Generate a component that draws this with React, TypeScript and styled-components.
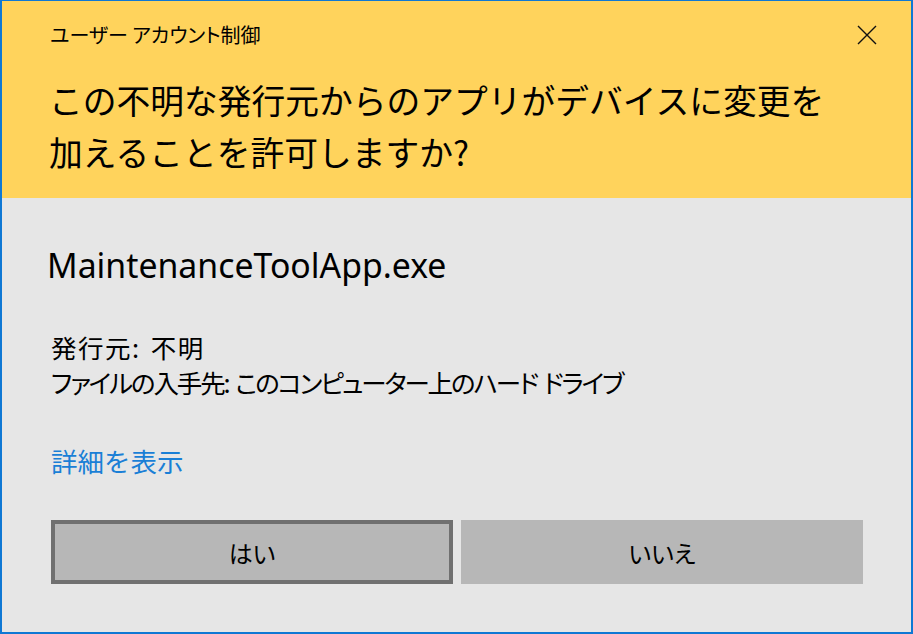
import React from "react";
import styled, { createGlobalStyle } from "styled-components";

const Global = createGlobalStyle`
  html, body { margin: 0; padding: 0; background: #e6e6e6; }
  * { box-sizing: border-box; }
  body { font-family: "Noto Sans CJK JP", "Noto Sans", sans-serif; color: #000; }
`;

const Window = styled.div`
  width: 913px;
  height: 634px;
  border: 2px solid #0f78d4;
  border-top-width: 1px;
  display: flex;
  flex-direction: column;
  background: #e6e6e6;
`;

const Header = styled.div`
  height: 197px;
  background: #ffd35c;
  padding: 22px 24px 0 47px;
  display: flex;
  flex-direction: column;
`;

const TitleRow = styled.div`
  display: flex;
  justify-content: space-between;
  align-items: center;
  height: 24px;
`;

const Title = styled.div`
  font-family: "Noto Sans CJK JP", sans-serif;
  font-size: 20px;
  line-height: 24px;
  font-feature-settings: "palt";
  padding-left: 1px;
`;

const CloseButton = styled.button`
  width: 40px;
  height: 24px;
  border: none;
  background: transparent;
  padding: 0;
  display: flex;
  align-items: center;
  justify-content: center;
`;

const Heading = styled.div`
  margin-top: 27px;
  font-family: "Noto Sans CJK JP", sans-serif;
  font-size: 33.75px;
  line-height: 52px;
`;

const Body = styled.div`
  flex: 1;
  padding: 47px 48px 0 49px;
  display: flex;
  flex-direction: column;
`;

const FileName = styled.div`
  margin-left: -4px;
  font-family: "Noto Sans", sans-serif;
  font-size: 33.8px;
  line-height: 40px;
`;

const Info = styled.div`
  margin-top: 44px;
  font-family: "Noto Sans CJK JP", sans-serif;
  font-size: 25.5px;
  line-height: 35px;
  font-feature-settings: "palt";
`;

const InfoLine = styled.div<{ $spacing: number }>`
  letter-spacing: ${(p) => p.$spacing}px;
  word-spacing: 3px;
`;

const DetailLink = styled.a`
  margin-top: 44px;
  font-family: "Noto Sans CJK JP", sans-serif;
  font-size: 26.5px;
  line-height: 35px;
  color: #1a7fd6;
  text-decoration: none;
  cursor: pointer;
  align-self: flex-start;
`;

const ButtonRow = styled.div`
  margin-top: 42px;
  display: grid;
  grid-template-columns: 402px 402px;
  gap: 8px;
`;

const DialogButton = styled.button<{ $focused?: boolean }>`
  height: 64px;
  background: #b7b7b7;
  border: ${(p) => (p.$focused ? "4px solid #707070" : "none")};
  font-family: "Noto Sans CJK JP", sans-serif;
  font-size: 24px;
  color: #000;
  padding: 0;
  font-feature-settings: "palt";
`;

export default function App() {
  return (
    <>
      <Global />
      <Window>
        <Header>
          <TitleRow>
            <Title>ユーザー アカウント制御</Title>
            <CloseButton aria-label="閉じる">
              <svg width="20" height="20" viewBox="0 0 20 20">
                <path d="M1 1 L19 19 M19 1 L1 19" stroke="#111" strokeWidth="1.4" fill="none" />
              </svg>
            </CloseButton>
          </TitleRow>
          <Heading>
            この不明な発行元からのアプリがデバイスに変更を
            <br />
            加えることを許可しますか?
          </Heading>
        </Header>
        <Body>
          <FileName>MaintenanceToolApp.exe</FileName>
          <Info>
            <InfoLine $spacing={1.5}>発行元: 不明</InfoLine>
            <InfoLine $spacing={-2.1}>ファイルの入手先: このコンピューター上のハード ドライブ</InfoLine>
          </Info>
          <DetailLink>詳細を表示</DetailLink>
          <ButtonRow>
            <DialogButton $focused>はい</DialogButton>
            <DialogButton>いいえ</DialogButton>
          </ButtonRow>
        </Body>
      </Window>
    </>
  );
}
